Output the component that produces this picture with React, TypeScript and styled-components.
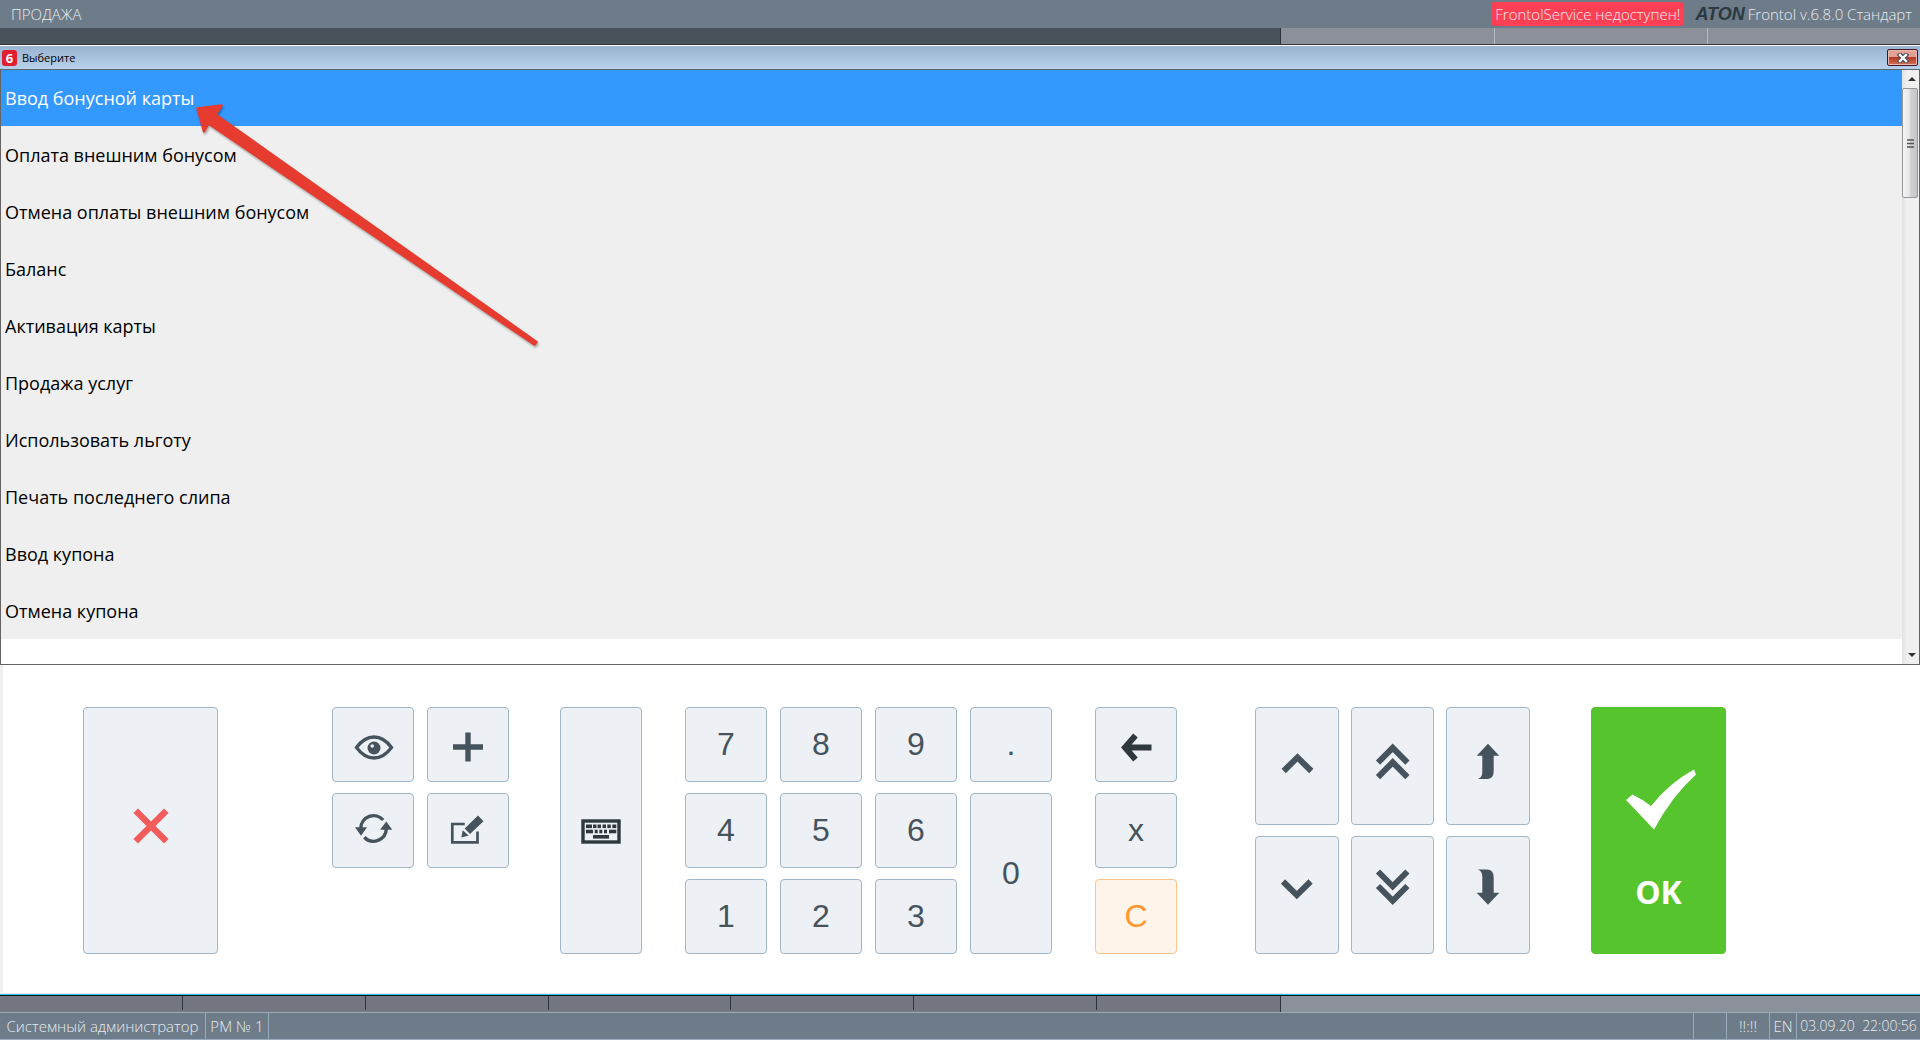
import React from 'react';
import styled, { createGlobalStyle, css } from 'styled-components';

const GlobalStyle = createGlobalStyle`
  * { box-sizing: border-box; }
  body { margin: 0; font-family: "Open Sans", "Noto Sans", sans-serif; }
  button { font: inherit; margin: 0; padding: 0; cursor: pointer; }
`;

const Screen = styled.div`
  position: relative;
  display: flex;
  flex-direction: column;
  min-height: 100vh;
  background: #fff;
`;

/* ---------- top bar ---------- */

const TopBar = styled.header`
  display: flex;
  align-items: center;
  height: 28px;
  padding: 0 8px 0 11px;
  background: #6e7b88;
  color: #e6ebf0;
  font-size: 15px;
  font-weight: 300;
  white-space: nowrap;
`;

const Mode = styled.span`
  flex: 1;
`;

const Alert = styled.span`
  padding: 0 4px;
  border-radius: 4px;
  background: #ff4054;
  line-height: 24px;
`;

const Logo = styled.span`
  margin: 0 3px 0 11px;
  color: #2b3940;
  font-family: "Liberation Sans", Arial, sans-serif;
  font-size: 18px;
  font-style: italic;
  font-weight: 700;
  line-height: 20px;
`;

const Strip = styled.div`
  display: grid;
  grid-template-columns: 2fr 1fr;
  height: 16px;
`;

const TopDark = styled.div`
  background: #48525b;
`;

const LightCells = styled.div`
  display: grid;
  grid-template-columns: repeat(3, 1fr);
  border-left: 1px solid #2c333a;
  background: #8c9099;
`;

const LightCell = styled.div`
  & + & { border-left: 1px solid #b4bcc8; }
`;

const DarkCells = styled.div`
  display: grid;
  grid-template-columns: repeat(7, 1fr);
  background: #747780;
`;

const DarkCell = styled.div`
  margin-bottom: 2px;
  border-right: 1px solid #2c333a;
  &:last-child { border-right: 0; }
`;

/* ---------- selection window ---------- */

const TitleBar = styled.div`
  position: relative;
  display: flex;
  align-items: center;
  height: 26px;
  margin-bottom: -1px;
  padding: 1px 2px 0;
  border-top: 1px solid #333;
  border-bottom: 1px solid #5c6874;
  box-shadow: inset 0 1px #fff;
  background: linear-gradient(#98b2d0, #b8d0ea);
`;

const AppIcon = styled.span`
  width: 15px;
  height: 16px;
  border-radius: 3px;
  background: #e01f30;
  color: #fff;
  font-size: 13px;
  font-weight: 700;
  line-height: 16px;
  text-align: center;
`;

const Title = styled.h1`
  flex: 1;
  margin: 0 0 0 5px;
  font-size: 11px;
  font-weight: 400;
`;

const CloseButton = styled.button`
  display: grid;
  place-items: center;
  width: 31px;
  height: 17px;
  border: 1px solid #431422;
  border-radius: 2px;
  box-shadow: inset 0 0 0 1px #e9b8ae;
  background: linear-gradient(#e3a195 0 45%, #b53a24 50%, #d4735c);
`;

const ListFrame = styled.div`
  display: flex;
  height: 596px;
  border: 1px solid #646464;
  border-top: 0;
`;

const List = styled.ul`
  flex: 1;
  margin: 0;
  padding: 0;
  list-style: none;
`;

const ItemButton = styled.button<{ $selected: boolean }>`
  display: block;
  width: 100%;
  height: 57px;
  padding: 0 4px;
  border: 0;
  background: ${(p) => (p.$selected ? '#3399ff' : '#efefef')};
  color: ${(p) => (p.$selected ? '#fff' : '#000')};
  font-size: 18px;
  text-align: left;
`;

const ScrollBar = styled.div`
  display: flex;
  flex-direction: column;
  width: 17px;
  background: linear-gradient(90deg, #e3e3e3, #f0f0f0 30%);
`;

const ScrollButton = styled.button`
  display: grid;
  place-items: center;
  height: 19px;
  padding-left: 2px;
  border: 0;
  background: none;
`;

const ScrollTrack = styled.div`
  flex: 1;
`;

const ScrollThumb = styled.div`
  display: grid;
  place-items: center;
  height: 110px;
  margin-right: 1px;
  border: 1px solid #979797;
  border-radius: 2px;
  background: linear-gradient(90deg, #f5f5f5, #e6e6e8 45%, #d0d0d4 55%, #c4c4ca);
`;

/* ---------- keypad ---------- */

const Keypad = styled.main`
  flex: 1;
  display: grid;
  align-content: start;
  grid-template-columns: 80fr 135fr 114fr 177fr 51fr 82fr 43fr 367fr 43fr 82fr 78fr 275fr 61fr 135fr 194fr;
  grid-template-rows: 247px;
  padding: 42px 0 39px;
  border-left: 3px solid #f0f0f0;
  border-bottom: 1px solid #ececec;
`;

const KeyGroup = styled.div<{ $at: number; $cols?: number; $rows?: string; $gap?: number }>`
  grid-column: ${(p) => p.$at};
  display: grid;
  grid-template-columns: repeat(${(p) => p.$cols ?? 1}, 1fr);
  grid-template-rows: ${(p) => p.$rows ?? '1fr'};
  gap: 11px ${(p) => p.$gap ?? 13}px;
`;

const tones = {
  plain: css`border-color: #a0b7c9; background: #edf1f5; color: #46535c;`,
  dark: css`border-color: #a0b7c9; background: #edf1f5; color: #2e383d;`,
  cancel: css`border-color: #a0b7c9; background: #edf1f5; color: #f25c5c;`,
  clear: css`border-color: #ffc48c; background: #fff4ea; color: #ff962e;`,
  ok: css`padding-top: 21px; border-color: #56c42d; background: #56c42d; color: #fff;`,
};

const Key = styled.button<{ $tone?: keyof typeof tones; $span?: number }>`
  display: flex;
  flex-direction: column;
  align-items: center;
  justify-content: center;
  grid-row: span ${(p) => p.$span ?? 1};
  border: 1px solid;
  border-radius: 4px;
  ${(p) => tones[p.$tone ?? 'plain']}
`;

const CharKey = styled(Key)`
  padding-bottom: 2px;
  font-family: "Liberation Sans", Arial, sans-serif;
  font-size: 32px;
  line-height: 32px;
`;

const OkLabel = styled.span`
  margin-top: 40px;
  font-size: 32px;
  font-weight: 700;
  line-height: 44px;
`;

const KeyIcon = styled.svg.attrs({ viewBox: '0 0 48 48', 'aria-hidden': true })`
  width: 48px;
  height: 48px;
  overflow: visible;
  fill: none;
  stroke: none;
`;

/* ---------- status bar ---------- */

const BottomEdge = styled.div`
  height: 2px;
  border-top: 1px solid #1cc8ea;
  background: #101418;
`;

const StatusBar = styled.footer`
  display: flex;
  height: 28px;
  border: 1px solid #9aaabd;
  border-width: 1px 0;
  background: #6e7b88;
  color: #e6ebf0;
  font-size: 15px;
  font-weight: 300;
  line-height: 26px;
  white-space: pre;
`;

const StatusCell = styled.span<{ $width: number }>`
  width: ${(p) => p.$width}px;
  border-right: 1px solid #9aaabd;
  text-align: center;
`;

const StatusFill = styled.span`
  flex: 1;
  border-right: 1px solid #9aaabd;
`;

const Clock = styled.time`
  width: 123px;
  font-size: 14px;
  text-align: center;
`;

const Pointer = styled.svg`
  position: absolute;
  left: 190px;
  top: 100px;
  pointer-events: none;
  filter: drop-shadow(1px 2px 1px rgba(0, 0, 0, 0.3));
`;

const items = [
  'Ввод бонусной карты',
  'Оплата внешним бонусом',
  'Отмена оплаты внешним бонусом',
  'Баланс',
  'Активация карты',
  'Продажа услуг',
  'Использовать льготу',
  'Печать последнего слипа',
  'Ввод купона',
  'Отмена купона',
];

const keyboardKeys = [
  [9, 17.5, 6], [16, 17.5, 3.5], [20.5, 17.5, 3.5], [25.5, 17.5, 3.5], [30.3, 17.5, 3.5], [35.3, 17.5, 4],
  [9, 22.7, 7], [17.7, 22.7, 3], [22.3, 22.7, 3], [27, 22.7, 3], [32, 22.7, 7.3],
  [16, 28, 16],
];

function Chevron({ points }: { points: string[] }) {
  return (
    <KeyIcon>
      {points.map((p) => (
        <polyline key={p} points={p} stroke="currentColor" strokeWidth="6" />
      ))}
    </KeyIcon>
  );
}

export default function App() {
  return (
    <Screen>
      <GlobalStyle />
      <TopBar>
        <Mode>ПРОДАЖА</Mode>
        <Alert>FrontolService недоступен!</Alert>
        <Logo>ATON</Logo>
        <span>Frontol v.6.8.0 Стандарт</span>
      </TopBar>
      <Strip>
        <TopDark />
        <LightCells>
          <LightCell />
          <LightCell />
          <LightCell />
        </LightCells>
      </Strip>

      <TitleBar>
        <AppIcon>6</AppIcon>
        <Title>Выберите</Title>
        <CloseButton aria-label="Закрыть">
          <svg width="12" height="10" viewBox="0 0 12 10" aria-hidden="true">
            <path d="M3 2l6 6M9 2L3 8" stroke="#4a4a5c" strokeWidth="4.6" strokeLinecap="square" />
            <path d="M3 2l6 6M9 2L3 8" stroke="#fff" strokeWidth="2.4" strokeLinecap="square" />
          </svg>
        </CloseButton>
      </TitleBar>
      <ListFrame>
        <List>
          {items.map((text, i) => (
            <li key={text}>
              <ItemButton $selected={i === 0}>{text}</ItemButton>
            </li>
          ))}
        </List>
        <ScrollBar>
          <ScrollButton aria-label="Вверх">
            <svg width="8" height="4" aria-hidden="true"><path d="M4 0l4 4H0z" fill="#333" /></svg>
          </ScrollButton>
          <ScrollTrack>
            <ScrollThumb>
              <svg width="7" height="9" aria-hidden="true">
                <path d="M0 1h7M0 4.5h7M0 8h7" stroke="#555" strokeWidth="1.4" />
              </svg>
            </ScrollThumb>
          </ScrollTrack>
          <ScrollButton aria-label="Вниз">
            <svg width="8" height="4" aria-hidden="true"><path d="M0 0h8L4 4z" fill="#333" /></svg>
          </ScrollButton>
        </ScrollBar>
      </ListFrame>

      <Keypad>
        <KeyGroup $at={2}>
          <Key $tone="cancel" aria-label="Отмена">
            <KeyIcon>
              <path d="M8.700 3.700l30.600 30.600M39.300 3.700L8.700 34.300" stroke="currentColor" strokeWidth="6.400" />
            </KeyIcon>
          </Key>
        </KeyGroup>

        <KeyGroup $at={4} $cols={2} $rows="repeat(3, 1fr)">
          <Key aria-label="Просмотр">
            <KeyIcon>
              <path
                d="M7.500 26.500C13 19 19 16 25 16s12 3 17.500 10.500C37 34 31 37 25 37S13 34 7.500 26.500z"
                stroke="currentColor"
                strokeWidth="3.300"
              />
              <circle cx="25" cy="27" r="6.500" fill="currentColor" />
              <circle cx="23.200" cy="25" r="1.800" fill="#edf1f5" />
            </KeyIcon>
          </Key>
          <Key aria-label="Добавить">
            <KeyIcon>
              <path d="M24 11.500v29M9 26h30" stroke="currentColor" strokeWidth="5.400" />
            </KeyIcon>
          </Key>
          <Key aria-label="Обновить">
            <KeyIcon>
              <path
                d="M11.800 21A12.800 12.800 0 0 1 34.200 13M15.300 30.300A12.800 12.800 0 0 0 37.300 22"
                stroke="currentColor"
                strokeWidth="3.400"
              />
              <path d="M6 20.200h12l-6 8.500zM37.300 14.500l6 8.300H31z" fill="currentColor" />
            </KeyIcon>
          </Key>
          <Key aria-label="Изменить">
            <KeyIcon>
              <path d="M20.700 17H8.300v18.300h25.200V24.500" stroke="currentColor" strokeWidth="2.700" />
              <path
                d="M34 8.500l5.500 5.700L26 27l-5.300-5.500zM17.300 30.500l1.400-7.300 6 5.300z"
                fill="currentColor"
              />
            </KeyIcon>
          </Key>
        </KeyGroup>

        <KeyGroup $at={6}>
          <Key $tone="dark" aria-label="Клавиатура">
            <KeyIcon>
              <rect x="6" y="14" width="36" height="21" stroke="currentColor" strokeWidth="3.400" />
              {keyboardKeys.map(([x, y, w]) => (
                <rect key={`${x}-${y}`} x={x} y={y} width={w} height="3.600" fill="currentColor" />
              ))}
            </KeyIcon>
          </Key>
        </KeyGroup>

        <KeyGroup $at={8} $cols={4} $rows="repeat(3, 1fr)">
          <CharKey>7</CharKey>
          <CharKey>8</CharKey>
          <CharKey>9</CharKey>
          <CharKey>.</CharKey>
          <CharKey>4</CharKey>
          <CharKey>5</CharKey>
          <CharKey>6</CharKey>
          <CharKey $span={2}>0</CharKey>
          <CharKey>1</CharKey>
          <CharKey>2</CharKey>
          <CharKey>3</CharKey>
        </KeyGroup>

        <KeyGroup $at={10} $rows="repeat(3, 1fr)">
          <Key $tone="dark" aria-label="Стереть">
            <KeyIcon>
              <path d="M23.500 14.500L13 26.500l10.500 12M13 26.500h26.500" stroke="currentColor" strokeWidth="6" />
            </KeyIcon>
          </Key>
          <CharKey>x</CharKey>
          <CharKey $tone="clear">C</CharKey>
        </KeyGroup>

        <KeyGroup $at={12} $cols={3} $rows="repeat(2, 1fr)" $gap={12}>
          <Key aria-label="Строка вверх">
            <Chevron points={['10.700,29 24.500,15.400 38.300,29']} />
          </Key>
          <Key aria-label="Страница вверх">
            <Chevron points={['10,20.600 24.700,5.800 39.400,20.600', '10,35.100 24.700,20.300 39.400,35.100']} />
          </Key>
          <Key aria-label="В начало">
            <KeyIcon>
              <path
                d="M24 1.700l11.300 12h-5.600V29q0 8-6.700 8h-9.300q4.600-1.500 4.600-7V13.700h-5.600z"
                fill="currentColor"
              />
            </KeyIcon>
          </Key>
          <Key aria-label="Строка вниз">
            <Chevron points={['10,10.500 23.800,24.100 37.600,10.500']} />
          </Key>
          <Key aria-label="Страница вниз">
            <Chevron points={['10,.500 24.700,15.300 39.400,.500', '10,15 24.700,29.800 39.400,15']} />
          </Key>
          <Key aria-label="В конец">
            <KeyIcon>
              <path
                d="M24 33.700l11.300-12h-5.600V6.500q0-8-6.700-8h-9.300q4.600 1.500 4.600 7v16.200h-5.600z"
                fill="currentColor"
              />
            </KeyIcon>
          </Key>
        </KeyGroup>

        <KeyGroup $at={14}>
          <Key $tone="ok">
            <svg width="75" height="61" viewBox="-5 0 75 61" aria-hidden="true">
              <path d="M0 31l6.500-5.500Q16 30 25 37 43 14 68 .5l2 5Q46 27 28 60.500z" fill="currentColor" />
            </svg>
            <OkLabel>OK</OkLabel>
          </Key>
        </KeyGroup>
      </Keypad>

      <BottomEdge />
      <Strip>
        <DarkCells>
          {Array.from({ length: 7 }, (_, i) => (
            <DarkCell key={i} />
          ))}
        </DarkCells>
        <LightCells />
      </Strip>
      <StatusBar>
        <StatusCell $width={206}>Системный администратор</StatusCell>
        <StatusCell $width={63}>РМ № 1</StatusCell>
        <StatusFill />
        <StatusCell $width={33} />
        <StatusCell $width={43}>!!:!!</StatusCell>
        <StatusCell $width={27}>EN</StatusCell>
        <Clock>03.09.20  22:00:56</Clock>
      </StatusBar>

      <Pointer width="360" height="260" viewBox="0 0 360 260" aria-hidden="true">
        <path
          d="M7.500 8.500L31.500 5.500 25.500 14.500 346.500 242 344.500 244.500 18.500 23.500 14 31.500z"
          fill="#e63c2f"
          stroke="#e63c2f"
          strokeWidth="2.500"
          strokeLinejoin="round"
        />
      </Pointer>
    </Screen>
  );
}
